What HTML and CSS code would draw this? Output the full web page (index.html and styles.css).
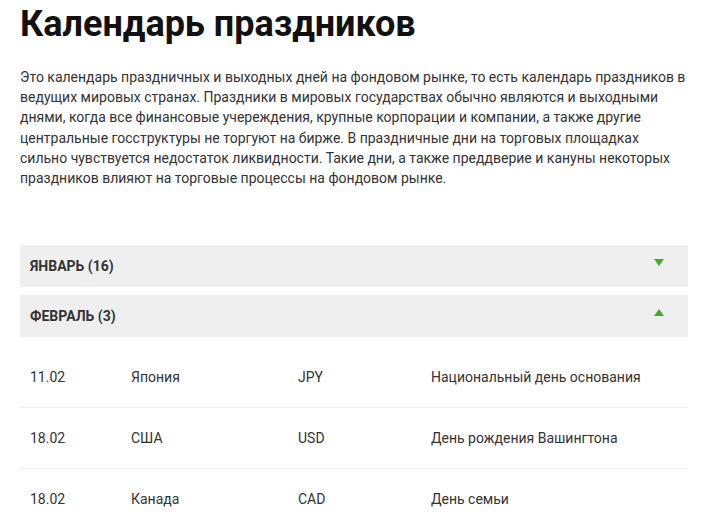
FILE: index.html
```html
<!DOCTYPE html>
<html lang="ru">
<head>
<meta charset="utf-8">
<link rel="stylesheet" href="styles.css">
</head>
<body>
<main class="page">
  <h1 class="title">Календарь праздников</h1>
  <p class="intro">Это календарь праздничных и выходных дней на фондовом рынке, то есть календарь праздников в ведущих мировых странах. Праздники в мировых государствах обычно являются и выходными днями, когда все финансовые учереждения, крупные корпорации и компании, а также другие центральные госструктуры не торгуют на бирже. В праздничные дни на торговых площадках сильно чувствуется недостаток ликвидности. Такие дни, а также преддверие и кануны некоторых праздников влияют на торговые процессы на фондовом рынке.</p>

  <section class="accordion">
    <div class="acc-head">
      <span class="acc-title">ЯНВАРЬ (16)</span>
      <span class="tri tri-down"></span>
    </div>
    <div class="acc-head">
      <span class="acc-title">ФЕВРАЛЬ (3)</span>
      <span class="tri tri-up"></span>
    </div>
    <div class="rows">
      <div class="row"><span class="c-date">11.02</span><span class="c-country">Япония</span><span class="c-cur">JPY</span><span class="c-name">Национальный день основания</span></div>
      <div class="row"><span class="c-date">18.02</span><span class="c-country">США</span><span class="c-cur">USD</span><span class="c-name">День рождения Вашингтона</span></div>
      <div class="row"><span class="c-date">18.02</span><span class="c-country">Канада</span><span class="c-cur">CAD</span><span class="c-name">День семьи</span></div>
    </div>
  </section>
</main>
</body>
</html>
```

FILE: styles.css
```css
* { box-sizing: border-box; }
html, body { margin: 0; padding: 0; background: #fff; }
body { font-family: Roboto, "Noto Sans", sans-serif; color: #222; }
.page { padding: 0 27px 0 20px; }
.title {
  margin: 0;
  padding-top: 3px;
  font-size: 36px;
  line-height: 42px;
  font-weight: 700;
  color: #111;
}
.intro {
  margin: 22px 0 0;
  font-size: 14px;
  line-height: 20.2px;
  color: #333;
}
.accordion { margin-top: 57px; display: flex; flex-direction: column; gap: 8px; }
.acc-head {
  height: 42px;
  background: #efefef;
  display: flex;
  align-items: center;
  justify-content: space-between;
  padding: 0 24px 0 10px;
}
.acc-title { font-size: 14px; font-weight: 700; color: #333; }
.tri { width: 0; height: 0; border-left: 5px solid transparent; border-right: 5px solid transparent; margin-bottom: 8px; }
.tri-down { border-top: 7px solid #4aa82a; }
.tri-up { border-bottom: 7px solid #4aa82a; }
.rows { margin-top: 2px; }
.row {
  display: grid;
  grid-template-columns: 101px 167px 133px 1fr;
  align-items: center;
  height: 61px;
  padding-left: 10px;
  padding-bottom: 1px;
  font-size: 14px;
  color: #333;
  border-bottom: 1px solid #ececec;
}
.row:last-child { border-bottom: none; }
```
